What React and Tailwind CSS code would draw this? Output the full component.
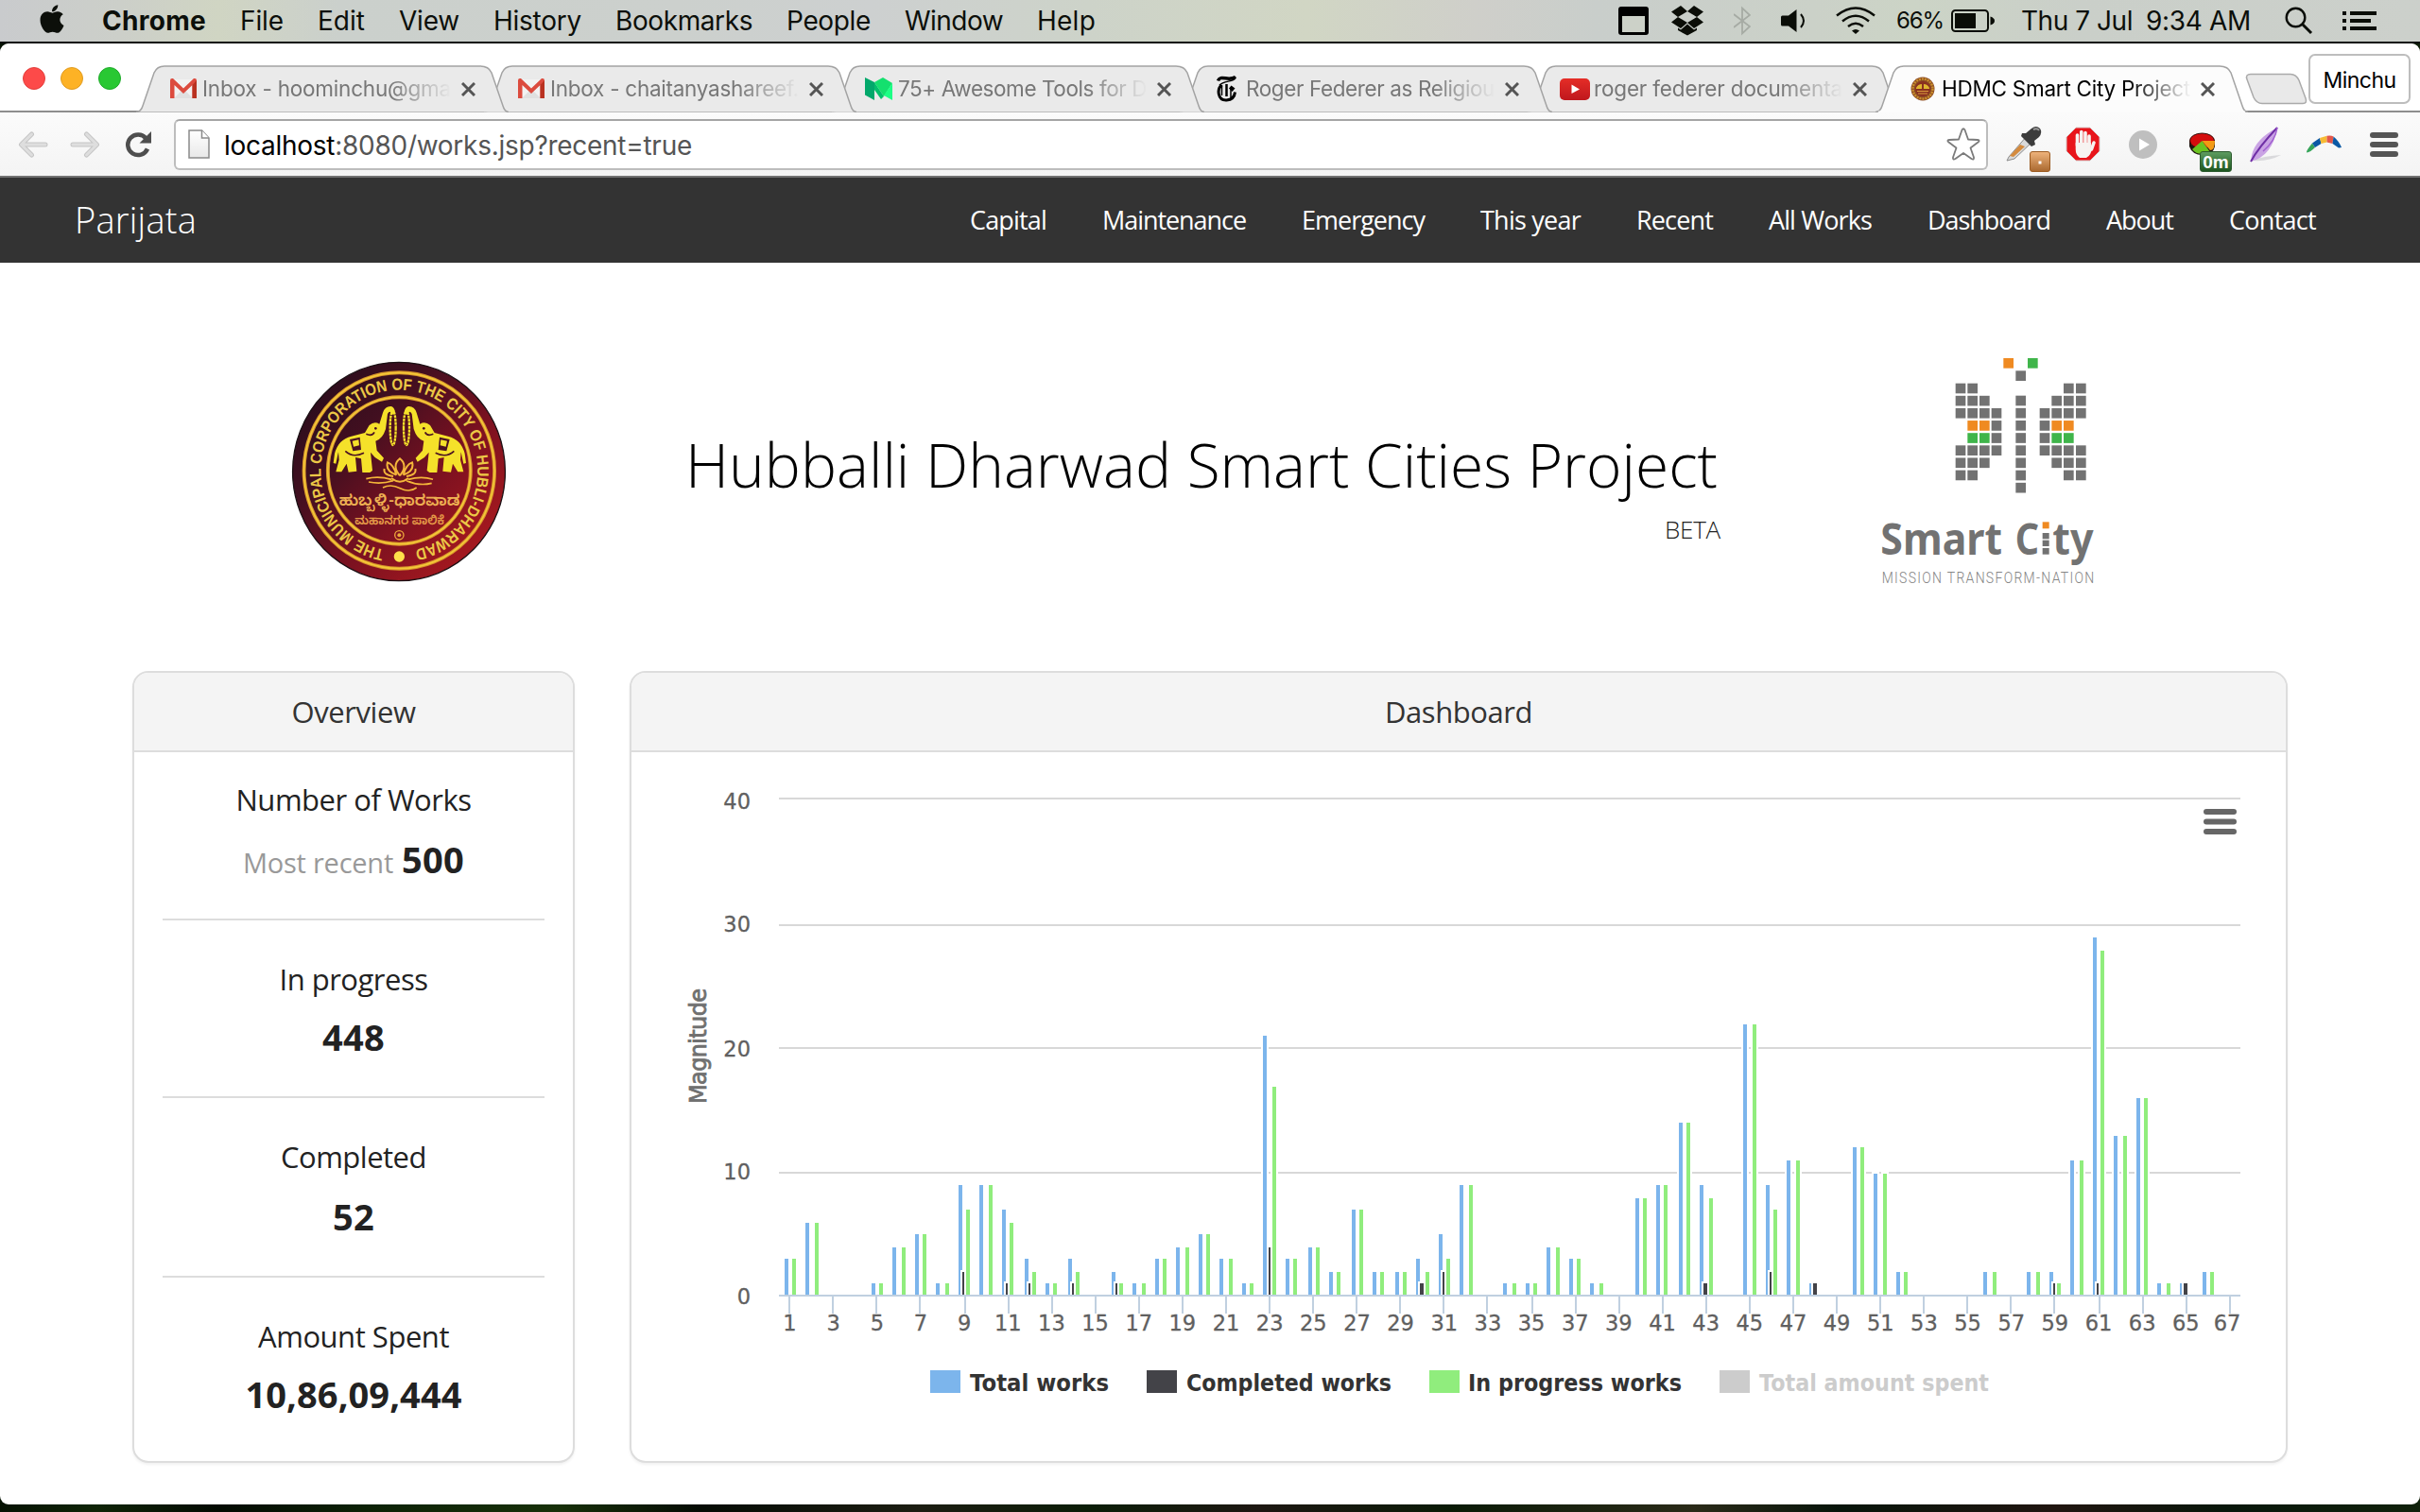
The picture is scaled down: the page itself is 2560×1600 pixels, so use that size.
import React, { useLayoutEffect, useRef, useState } from "react";
import { FaApple } from "react-icons/fa";

/* Inline text whose tracking is adjusted so that it fills a given width. */
function FitText({ w, className = "", children }) {
  const ref = useRef(null);
  const [spacing, setSpacing] = useState(0);
  useLayoutEffect(() => {
    const el = ref.current;
    const natural = el.getBoundingClientRect().width;
    setSpacing((w - natural) / el.textContent.length);
  }, [w]);
  return (
    <span
      ref={ref}
      className={"inline-block whitespace-nowrap shrink-0 " + className}
      style={{ letterSpacing: spacing }}
    >
      {children}
    </span>
  );
}

/* ---------- macOS menu bar ---------- */

const MENUS = [
  ["File", 46], ["Edit", 50], ["View", 64], ["History", 93], ["Bookmarks", 145],
  ["People", 89], ["Window", 104], ["Help", 62],
];

function MenuBar() {
  return (
    <div className="flex h-[46px] shrink-0 items-center border-b-2 border-[#060a08] bg-[linear-gradient(90deg,#c9cbcd_0%,#cccfc9_5%,#d0d5c3_9%,#cbd0cc_14%,#ccd0cd_28%,#cdd0d0_36%,#cdd3c9_45%,#d1d6c4_54%,#cfcfca_61%,#c9cecb_66%,#cbd1c8_75%,#ccd4c6_79%,#cacfc9_86%,#ccd0cb_100%)] text-[28px] leading-none text-[#0c0f0a]">
      <FaApple className="ml-[40px] -mt-1 h-[34px] w-[30px] shrink-0" />
      <FitText w={110} className="ml-[38px] font-bold">Chrome</FitText>
      <div className="ml-9 flex gap-9">
        {MENUS.map(([t, w]) => <FitText key={t} w={w}>{t}</FitText>)}
      </div>
      <svg className="ml-auto shrink-0" width="32" height="30" viewBox="0 0 32 30">
        <rect width="32" height="30" rx="3" fill="#000" />
        <rect x="4" y="10" width="24" height="17" fill="#ccd1c8" />
      </svg>
      <svg className="ml-6 shrink-0" width="34" height="32" viewBox="0 0 34 32" fill="#0a0d07">
        <path d="M10 0 0 6.5 7 12 17 6ZM24 0 17 6 27 12 34 6.5ZM0 17.5 7 12 17 18 10 24ZM34 17.5 27 12 17 18 24 24ZM17 19.5 24 25.5 27 23.5V26L17 31.5 7 26V23.5L10 25.5Z" />
      </svg>
      <svg className="ml-8 shrink-0" width="18" height="32" viewBox="0 0 18 32" fill="none" stroke="#a6aba4" strokeWidth="1.8">
        <path d="M0 9 17 22 9 29.5V2.5L17 10 0 23" />
      </svg>
      <svg className="ml-8 shrink-0" width="26" height="26" viewBox="0 0 26 26">
        <path d="M0 9q0-1.500 1.500-1.500H8L16.500 1V25L8 18.500H1.500Q0 18.500 0 17Z" fill="#0a0d07" />
        <path d="M21 6Q27 13 21 20" fill="none" stroke="#0a0d07" strokeWidth="2" />
      </svg>
      <svg className="ml-8 shrink-0" width="42" height="30" viewBox="0 0 42 30" fill="none" stroke="#0a0d07" strokeWidth="2.500">
        <path d="M1 9.500Q21-6.500 41 9.500M7 15.500Q21 4 35 15.500M13 21Q21 14.500 29 21" />
        <path d="M17 25.500Q21 22.500 25 25.500L21 29Z" fill="#0a0d07" stroke="none" />
      </svg>
      <FitText w={50} className="ml-[22px] text-[24px]">66%</FitText>
      <svg className="ml-2 shrink-0" width="46" height="24" viewBox="0 0 46 24">
        <rect x="1" y="1" width="38" height="22" rx="3.500" fill="none" stroke="#0a0d07" strokeWidth="2" />
        <rect x="4" y="4" width="22" height="16" fill="#0a0d07" />
        <path d="M41.500 7.500Q46 9 46 12T41.500 16.500Z" fill="#0a0d07" />
      </svg>
      <FitText w={118} className="ml-[28px]">Thu 7 Jul</FitText>
      <FitText w={111} className="ml-[14px]">9:34 AM</FitText>
      <svg className="ml-[36px] shrink-0" width="30" height="30" viewBox="0 0 30 30" fill="none" stroke="#0a0d07">
        <circle cx="11.500" cy="11.500" r="9.800" strokeWidth="2.400" />
        <path d="M18.500 18.500 28 28" strokeWidth="3" />
      </svg>
      <svg className="ml-[31px] mr-[46px] shrink-0" width="36" height="20" viewBox="0 0 36 20" fill="#0a0d07">
        <path d="M0 0h4v4H0zM8 0h28v4H8zM0 8h4v4H0zM8 8h22v4H8zM0 16h4v4H0zM8 16h28v4H8z" />
      </svg>
    </div>
  );
}

/* ---------- Browser tabs ---------- */

const Gmail = () => (
  <svg width="28" height="22" viewBox="0 0 28 22">
    <path d="M2 1H26V21H2Z" fill="#f2f2f2" />
    <path d="M4 21 14 11 24 21Z" fill="#e0e0e0" />
    <path d="M0 2V21H4.500V7L14 16 23.500 7V21H28V2Q28 0 26 0H25L14 10.500 3 0H2Q0 0 0 2Z" fill="#dc4b3e" />
    <path d="M23.500 7V21H28V2Z" fill="#b93221" />
  </svg>
);
const Medium = () => (
  <svg width="30" height="24" viewBox="0 0 30 24">
    <path d="M0 0 10 5V24L0 18.500Z" fill="#02a86b" />
    <path d="M10 5 19 0 29 6 20 20Z" fill="#14e06e" />
    <path d="M10 5 20 20 17 23 10 13Z" fill="#00c06b" />
    <path d="M29 6V24L20 19Z" fill="#1cff85" />
  </svg>
);
const Times = () => (
  <svg width="22" height="28" viewBox="0 0 22 28" fill="none" stroke="#000">
    <path d="M1.500 5.500C4-1.500 12 6.500 20 1.500" strokeWidth="3.500" />
    <path d="M20 1.500C19.500 7 8 5 3 10" strokeWidth="1.500" />
    <path d="M10.500 9V22" strokeWidth="2.500" />
    <path d="M5.500 10C0 14 1 26.500 10.500 26C16 25.500 19 22.500 19.500 17.500" strokeWidth="3" />
    <path d="M5.500 10V21" strokeWidth="1.500" />
    <path d="M15.500 10.500 19.500 13.500 16.500 17 13 13.500Z" fill="#000" stroke="none" />
    <path d="M15 12V23" strokeWidth="1.500" />
  </svg>
);
const YouTube = () => (
  <svg width="32" height="23" viewBox="0 0 32 23">
    <defs>
      <linearGradient id="yt" x2="0" y2="1"><stop stopColor="#e52d27" /><stop offset="1" stopColor="#bf171d" /></linearGradient>
    </defs>
    <rect width="32" height="23" rx="5" fill="url(#yt)" />
    <path d="M12.500 6.500 21 11.500 12.500 16Z" fill="#fff" />
  </svg>
);
const MiniSeal = () => (
  <svg width="26" height="26" viewBox="0 0 26 26">
    <circle cx="13" cy="13" r="12.500" fill="#8c4a24" />
    <circle cx="13" cy="13" r="10.500" fill="none" stroke="#c98f2c" strokeWidth="2.500" strokeDasharray="2 1" />
    <circle cx="13" cy="13" r="8" fill="#8a3120" />
    <path d="M6 12Q8 8 12 8V13H6ZM20 12Q18 8 14 8V13H20Z" fill="#e0b52f" />
    <path d="M7 15.500H19M8 18H18" stroke="#d79c3a" strokeWidth="1.200" />
  </svg>
);

const TABS = [
  { icon: <Gmail />, text: "Inbox - hoominchu@gma" },
  { icon: <Gmail />, text: "Inbox - chaitanyashareef." },
  { icon: <Medium />, text: "75+ Awesome Tools for D" },
  { icon: <Times />, text: "Roger Federer as Religiou" },
  { icon: <YouTube />, text: "roger federer documenta" },
  { icon: <MiniSeal />, text: "HDMC Smart City Project", active: true },
];

function Tab({ icon, text, active, z }) {
  return (
    <div className="relative -mr-[26px] h-[50px] w-[394px] shrink-0" style={{ zIndex: z }}>
      <svg className="absolute inset-0" width="394" height="50" viewBox="0 0 394 50">
        <path
          d="M0 49.500Q5 49.500 7 43L19 8Q22 1 30 1H364Q373 1 376 8L388 43Q390 49.500 394 49.500"
          fill={active ? "#fcfcfc" : "#eaeaea"} stroke="#a3a3a3" strokeWidth="1.500"
        />
        {active && <path d="M3 50H391" stroke="#fbfbfb" strokeWidth="3" />}
      </svg>
      <div className="relative flex h-full items-center">
        <div className="ml-[34px] flex w-8 shrink-0 justify-center">{icon}</div>
        <div className="ml-[4px] w-[264px] overflow-hidden whitespace-nowrap [mask-image:linear-gradient(90deg,#000_75%,transparent_100%)]">
          <FitText w={263} className={"text-[22.5px] leading-[30px] " + (active ? "text-black" : "text-[#777]")}>{text}</FitText>
        </div>
        <svg className="ml-[10px] shrink-0" width="15" height="15" viewBox="0 0 15 15" stroke="#555" strokeWidth="3">
          <path d="M1 1 14 14M14 1 1 14" />
        </svg>
      </div>
    </div>
  );
}

function TabStrip() {
  return (
    <div className="flex h-[73px] items-end rounded-t-[10px] border-b-2 border-[#8e8e8e] bg-white">
      <div className="ml-6 flex gap-4 self-center pt-[3px]">
        <div className="size-6 rounded-full border border-[#e33e3b] bg-[#fd4a49]" />
        <div className="size-6 rounded-full border border-[#e09b20] bg-[#fdb225]" />
        <div className="size-6 rounded-full border border-[#1eaa29] bg-[#29c833]" />
      </div>
      <div className="ml-4 -mb-[2px] flex">
        {TABS.map((t, i) => <Tab key={t.text} {...t} z={t.active ? 20 : 10 - i} />)}
      </div>
      <svg className="mb-[6px] ml-[23px] shrink-0" width="66" height="34" viewBox="0 0 66 34">
        <path d="M6 1.500H48Q54 1.500 57 8L64 27Q66 32.500 61 32.500H18Q12 32.500 9 26L2 7Q0 1.500 6 1.500Z" fill="#e9e9e9" stroke="#aaa" strokeWidth="1.500" />
      </svg>
      <div className="mb-[7px] ml-[1px] flex h-[53px] w-[108px] shrink-0 items-center justify-center rounded-[7px] border-2 border-[#bdbdbd] bg-white pt-[3px] text-[23px] leading-none text-black">
        <FitText w={77}>Minchu</FitText>
      </div>
    </div>
  );
}

/* ---------- Toolbar ---------- */

function Toolbar() {
  return (
    <div className="flex h-[69px] items-center border-b-2 border-[#717171] bg-gradient-to-b from-[#fbfbfb] to-[#f4f4f4]">
      <svg className="ml-[19px] shrink-0" width="32" height="28" viewBox="0 0 32 28" fill="none" stroke="#c6c6c6" strokeWidth="5" strokeLinejoin="round" strokeLinecap="round">
        <path d="M14.500 3 3.500 14 14.500 25M4 14H29" /><path d="M14.500 3 3.500 14 14.500 25M4 14H29" stroke="#dedede" strokeWidth="3" />
      </svg>
      <svg className="ml-[23px] shrink-0" width="32" height="28" viewBox="0 0 32 28" fill="none" stroke="#c6c6c6" strokeWidth="5" strokeLinejoin="round" strokeLinecap="round">
        <path d="M17.500 3 28.500 14 17.500 25M28 14H3" /><path d="M17.500 3 28.500 14 17.500 25M28 14H3" stroke="#dedede" strokeWidth="3" />
      </svg>
      <svg className="ml-[26px] shrink-0" width="28" height="28" viewBox="0 0 28 28">
        <path d="M22.500 7.500A10.800 10.800 0 1 0 24 18.500" fill="none" stroke="#4e4e4e" strokeWidth="4.500" />
        <path d="M28 0V12.500H15.500Z" fill="#4e4e4e" />
      </svg>
      <div className="ml-6 flex h-[54px] w-[1919px] shrink-0 items-center rounded-[6px] border-2 border-[#bdbdbd] border-t-[#a5a5a5] bg-white">
        <svg className="ml-[13px] shrink-0" width="23" height="31" viewBox="0 0 23 31">
          <defs><linearGradient id="pg" x2="0" y2="1"><stop stopColor="#fff" /><stop offset="1" stopColor="#e8e8e8" /></linearGradient></defs>
          <path d="M1 1H14.500L22 9V30H1Z" fill="url(#pg)" stroke="#8a8a8a" strokeWidth="1.500" />
          <path d="M14.500 1V9H22" fill="#fff" stroke="#8a8a8a" strokeWidth="1.500" />
        </svg>
        <FitText w={495} className="ml-[15px] pt-[2px] text-[28px] leading-none text-[#555]"><span className="text-black">localhost</span>:8080/works.jsp?recent=true</FitText>
        <svg className="ml-auto mr-[6px] shrink-0" width="36" height="35" viewBox="0 0 36 35" fill="#fff" stroke="#7b7b7b" strokeWidth="1.800" strokeLinejoin="round">
          <path d="M16.500 2.500Q18 0 19.500 2.500L23 12.500 33 13Q36 13.500 33.500 15.500L25.500 21.500 29 31.500Q29.500 34.500 26.500 33L18 27 9.500 33Q6.500 34.500 7 31.500L10.500 21.500 2.500 15.500Q0 13.500 3 13L13 12.500Z" />
        </svg>
      </div>
      {/* color picker */}
      <svg className="ml-[17px] mt-[8px] shrink-0" width="50" height="50" viewBox="0 0 50 50">
        <defs><linearGradient id="bg1" x2="0" y2="1"><stop stopColor="#efb47c" /><stop offset="1" stopColor="#a9682f" /></linearGradient></defs>
        <path d="M5 34 24 12 30 18 11 36 3 38Z" fill="#d9d9d9" stroke="#8b8b8b" />
        <path d="M6 33 17 21 22 23 10 34Z" fill="#d48a3d" />
        <path d="M19 9 23 9 29 4Q34 0 38 4Q41 8 37 13L32 17 33 21 29 23 18 12Z" fill="#3c3c3c" />
        <path d="M31 5Q35 3 37 6" stroke="#999" strokeWidth="2" fill="none" />
        <rect x="27.500" y="28.500" width="21" height="21" rx="2.500" fill="url(#bg1)" stroke="#9c5c22" />
        <rect x="36.500" y="38.500" width="3" height="3" fill="#fff" />
      </svg>
      {/* ad blocker */}
      <svg className="ml-[15px] shrink-0" width="37" height="37" viewBox="0 0 37 37">
        <path d="M11 1H26L36 11V26L26 36H11L1 26V11Z" fill="#e8151b" stroke="#d9c9c9" />
        <g stroke="#f7f3f1" strokeWidth="3.600" strokeLinecap="round" fill="none">
          <path d="M12.500 20V9M16.800 18V5.500M21 18V6.500M25 20V10M27.500 24 30 17" />
        </g>
        <path d="M10.700 17H26.800V23L29 20Q27 31 22 33H15Q10.700 30 10.700 24Z" fill="#f7f3f1" />
      </svg>
      <svg className="ml-[30px] shrink-0" width="30" height="30" viewBox="0 0 30 30">
        <circle cx="15" cy="15" r="15" fill="#bfbfbf" /><path d="M11 8.500 22 15 11 21.500Z" fill="#fff" />
      </svg>
      {/* usage timer */}
      <div className="relative ml-[33px] mt-[21px] h-[42px] w-[46px] shrink-0 self-start">
        <svg width="30" height="26" viewBox="0 0 30 26">
          <path d="M1 9V15Q4 24 15 24T28 15V9Z" fill="#1e1712" />
          <ellipse cx="14.500" cy="9" rx="13" ry="8" fill="#d40d0d" stroke="#2b0d08" />
          <path d="M14.500 9H28Q28 19 23 19Z" fill="#f39a14" />
          <path d="M14.500 9 23 21Q10 26 4 18Z" fill="#6bc321" />
        </svg>
        <div className="absolute bottom-0 right-0 flex h-[22px] w-[34px] items-center justify-center rounded-[3px] border border-[#2b5a2e] bg-gradient-to-b from-[#5d9c60] to-[#1d5720] font-['Liberation_Sans'] text-[19px] font-bold leading-none text-white">
          0m
        </div>
      </div>
      {/* feather */}
      <svg className="ml-[19px] shrink-0" width="34" height="38" viewBox="0 0 34 38">
        <path d="M4 35Q16 31 33 30Q20 37 4 36Z" fill="#d9d9dc" />
        <path d="M29 1Q6 13 2 30L1 37Q24 31 29 1Z" fill="#c9a3e4" />
        <path d="M29 1Q9 22 1 37" fill="none" stroke="#6f2fa6" strokeWidth="2" />
        <path d="M29 1Q27 15 14 26" fill="none" stroke="#a05ed0" strokeWidth="1.500" />
      </svg>
      {/* boomerang */}
      <svg className="ml-[25px] shrink-0" width="40" height="20" viewBox="0 0 40 20">
        <path d="M1 18.500Q0 17 7 8.500L10 13Q5 18 1 18.500Z" fill="#36a55a" />
        <path d="M7 8.500 15 3 16.500 9 10 13Z" fill="#0b59a5" />
        <path d="M15 3 22.500.800V7.500L16.500 9Z" fill="#f6bb34" />
        <path d="M22.500.800Q27 0 29.500 1.500L28.500 9 22.500 7.500Z" fill="#e4584a" />
        <path d="M29.500 1.500Q35 6 38 13L35 13.500 28.500 9Z" fill="#0b59a5" />
      </svg>
      <div className="ml-[28px] flex flex-col gap-1">
        <div className="h-[6px] w-[30px] rounded-full bg-[#555]" />
        <div className="h-[6px] w-[30px] rounded-full bg-[#555]" />
        <div className="h-[6px] w-[30px] rounded-full bg-[#555]" />
      </div>
    </div>
  );
}

/* ---------- Page ---------- */

const NAV = [
  ["Capital", 81], ["Maintenance", 152], ["Emergency", 130], ["This year", 106], ["Recent", 81],
  ["All Works", 109], ["Dashboard", 130], ["About", 71], ["Contact", 92],
];

function NavBar() {
  return (
    <div className="flex h-[90px] items-center justify-between bg-[#333] pb-[2px] pl-[79px] pr-[110px] leading-none text-white">
      <FitText w={129} className="text-[38px] font-light">Parijata</FitText>
      <div className="flex gap-[59px] text-[27px]">
        {NAV.map(([t, w]) => <FitText key={t} w={w}>{t}</FitText>)}
      </div>
    </div>
  );
}

function Elephant() {
  return (
    <g>
      <path
        fill="#f5e12a"
        d="M192 330Q203 285 245 275L288 264 302 240Q318 226 334 236L345 200Q352 178 372 180Q384 184 384 204L374 206Q368 190 360 204L354 252Q344 284 322 290L326 320 348 344 342 356 320 342 306 326 312 384 304 390H280L276 346 258 342 262 386 236 389 230 362 214 388H196L206 350 204 325 196 362 188 360Z"
      />
      <path d="M240 285 272 278 276 318 250 322Z" fill="#4b1222" />
      <path d="M248 290 268 286 270 304 252 308Z" fill="#f5e12a" />
      <path d="M292 268Q312 276 318 262M226 322Q250 345 285 328" fill="none" stroke="#4b1222" strokeWidth="5" />
      <circle cx="322" cy="250" r="4" fill="#4b1222" />
      <ellipse cx="377" cy="248" rx="9" ry="55" fill="none" stroke="#f5e12a" strokeWidth="7" strokeDasharray="9 2" />
    </g>
  );
}

function Seal() {
  return (
    <svg width="260" height="260" viewBox="0 0 780 780" className="ml-[290px] mt-[92px] shrink-0">
      <defs>
        <linearGradient id="seal" x1=".1" y1=".1" x2=".85" y2=".85">
          <stop stopColor="#2a0d1c" /><stop offset=".3" stopColor="#420f20" />
          <stop offset=".65" stopColor="#7a1120" /><stop offset="1" stopColor="#a3181f" />
        </linearGradient>
        <path id="ring" d="M0 256A256 256 0 0 1 0-256A256 256 0 0 1 0 256" />
      </defs>
      <g transform="translate(396 387) scale(.972 1)">
        <circle r="347" fill="url(#seal)" stroke="#1b1014" strokeWidth="4" />
        <g transform="translate(1 -3)">
          <circle r="311" fill="none" stroke="#d8962c" strokeWidth="12" />
          <circle r="311" fill="none" stroke="#f4c838" strokeWidth="5" />
          <circle r="233" fill="none" stroke="#d8962c" strokeWidth="12" />
          <circle r="233" fill="none" stroke="#f4c838" strokeWidth="5" />
          <text fill="#ecc846" className="font-['Liberation_Sans'] text-[52px] font-bold">
            <textPath href="#ring" startOffset="49" textLength="1508" lengthAdjust="spacingAndGlyphs">
              THE MUNICIPAL CORPORATION OF THE CITY OF HUBLI-DHARWAD
            </textPath>
          </text>
        </g>
      </g>
      <circle cx="397" cy="657" r="17" fill="#ffe04a" />
      <circle cx="397" cy="589" r="14" fill="none" stroke="#eda93c" strokeWidth="4" />
      <circle cx="397" cy="589" r="6" fill="#eda93c" />
      <Elephant />
      <g transform="translate(797 0) scale(-1 1)"><Elephant /></g>
      <g fill="none" stroke="#f4b63a" strokeWidth="6">
        <path d="M399 400Q372 368 399 346Q426 368 399 400M388 398Q352 385 360 358Q380 365 388 398M410 398Q446 385 438 358Q418 365 410 398M378 402Q345 398 350 378M420 402Q453 398 448 378M372 408Q399 430 426 408" />
        <path d="M292 410Q330 400 372 412M426 412Q468 400 504 412M300 420Q340 428 378 416M420 416Q460 434 500 424M345 438Q370 425 400 440T452 438" strokeWidth="5" />
      </g>
      <text x="398" y="495" textAnchor="middle" fill="#eeb052" textLength="384" lengthAdjust="spacingAndGlyphs" className="font-['Noto_Sans_Kannada','Noto_Sans',sans-serif] text-[50px] font-semibold">ಹುಬ್ಬಳ್ಳಿ-ಧಾರವಾಡ</text>
      <text x="398" y="556" textAnchor="middle" fill="#e59a48" textLength="284" lengthAdjust="spacingAndGlyphs" className="font-['Noto_Sans_Kannada','Noto_Sans',sans-serif] text-[40px] font-semibold">ಮಹಾನಗರ ಪಾಲಿಕೆ</text>
    </svg>
  );
}

/* Butterfly mosaic: g gray, o orange, n green. Wings mirror around the body. */
const WING = ["gg..", "ggg.", "gggg", ".oog", ".nng", "gggg", "ggg.", "gg.."];
const CELL = { g: "#727272", o: "#ef8a21", n: "#3fb54a" };
const WING_X = [296, 334, 372, 410];
const MIRROR_X = [678, 639, 601, 563];

function SmartCityLogo() {
  const sq = (x, y, c, k) => <rect key={k} x={x} y={y} width="32" height="32" fill={c} />;
  return (
    <svg width="270" height="270" viewBox="0 0 810 810" className="ml-[150px] mt-[82px] shrink-0">
      {sq(448, 57, CELL.o, "a")}
      {sq(525, 57, CELL.n, "b")}
      {sq(487, 97, CELL.g, "c")}
      {Array.from({ length: 8 }, (_, i) => sq(487, 176 + i * 39.500, CELL.g, "s" + i))}
      {WING.flatMap((row, r) =>
        row.split("").flatMap((c, i) =>
          c === "." ? [] : [sq(WING_X[i], 137 + r * 39.400, CELL[c], `l${r}${i}`), sq(MIRROR_X[i], 137 + r * 39.400, CELL[c], `r${r}${i}`)]
        )
      )}
      <g fill="#727272" className="font-['Noto_Sans',sans-serif] text-[140px] font-bold">
        <text x="58" y="680" textLength="386" lengthAdjust="spacingAndGlyphs">Smart</text>
        <text x="485" y="680" textLength="76" lengthAdjust="spacingAndGlyphs">C</text>
        <text x="604" y="680" textLength="130" lengthAdjust="spacingAndGlyphs">ty</text>
      </g>
      <rect x="572" y="577" width="21" height="21" fill={CELL.o} />
      <rect x="572" y="612" width="21" height="19" fill={CELL.g} />
      <rect x="572" y="635" width="21" height="19" fill={CELL.g} />
      <rect x="572" y="660" width="21" height="20" fill={CELL.g} />
      <text transform="translate(62 770) scale(.84 1)" textLength="802" fill="#858585" className="font-['Roboto','Open_Sans',sans-serif] text-[50px] font-light">MISSION TRANSFORM-NATION</text>
    </svg>
  );
}

function Hero() {
  return (
    <div className="flex h-[432px] items-start">
      <Seal />
      <div className="ml-[174px] mt-[174px] flex w-[1096px] shrink-0 flex-col items-end">
        <FitText w={1092} className="mr-[3px] text-[64px] font-light leading-[80px] text-black">Hubballi Dharwad Smart Cities Project</FitText>
        <FitText w={59} className="mt-[8px] text-[26px] font-light leading-[40px] text-[#222]">BETA</FitText>
      </div>
      <SmartCityLogo />
    </div>
  );
}

function Card({ title, titleWidth, className, children }) {
  return (
    <div className={"flex h-[838px] shrink-0 flex-col overflow-hidden rounded-[17px] border-2 border-[#ddd] bg-white shadow-[0_2px_3px_rgba(0,0,0,0.06)] " + className}>
      <div className="flex h-[84px] shrink-0 items-center justify-center border-b-2 border-[#ddd] bg-[#f4f4f4] text-[31px] leading-none text-[#333]">
        <FitText w={titleWidth}>{title}</FitText>
      </div>
      {children}
    </div>
  );
}

function Overview() {
  return (
    <Card title="Overview" titleWidth={131} className="w-[468px]">
      <div className="mx-[30px] flex flex-col text-[31px] text-[#222]">
        <div className="flex h-[176px] flex-col items-center pt-[30px]">
          <FitText w={249} className="leading-[40px]">Number of Works</FitText>
          <div className="mt-[13px] flex items-baseline gap-[9px] leading-[60px]">
            <FitText w={159} className="text-[29px] text-[#999]">Most recent</FitText>
            <FitText w={66} className="text-[38px] font-bold">500</FitText>
          </div>
        </div>
        <div className="flex h-[188px] flex-col items-center border-t-2 border-[#ddd] pt-[42px]">
          <FitText w={157} className="leading-[40px]">In progress</FitText>
          <FitText w={66} className="mt-[11px] text-[38px] font-bold leading-[60px]">448</FitText>
        </div>
        <div className="flex h-[190px] flex-col items-center border-t-2 border-[#ddd] pt-[42px]">
          <FitText w={154} className="leading-[40px]">Completed</FitText>
          <FitText w={44} className="mt-[13px] text-[38px] font-bold leading-[60px]">52</FitText>
        </div>
        <div className="flex h-[190px] flex-col items-center border-t-2 border-[#ddd] pt-[42px]">
          <FitText w={202} className="leading-[40px]">Amount Spent</FitText>
          <FitText w={229} className="mt-[11px] text-[38px] font-bold leading-[60px]">10,86,09,444</FitText>
        </div>
      </div>
    </Card>
  );
}

const TOTAL = { 1: 3, 2: 6, 5: 1, 6: 4, 7: 5, 8: 1, 9: 9, 10: 9, 11: 7, 12: 3, 13: 1, 14: 3, 16: 2, 17: 1, 18: 3, 19: 4, 20: 5, 21: 3, 22: 1, 23: 21, 24: 3, 25: 4, 26: 2, 27: 7, 28: 2, 29: 2, 30: 3, 31: 5, 32: 9, 34: 1, 35: 1, 36: 4, 37: 3, 38: 1, 40: 8, 41: 9, 42: 14, 43: 9, 45: 22, 46: 9, 47: 11, 48: 1, 50: 12, 51: 10, 52: 2, 56: 2, 58: 2, 59: 2, 60: 11, 61: 29, 62: 13, 63: 16, 64: 1, 65: 1, 66: 2 };
const PROGRESS = { ...TOTAL, 9: 7, 11: 6, 12: 2, 14: 2, 16: 1, 23: 17, 30: 2, 31: 3, 43: 8, 46: 7, 48: 0, 59: 1, 61: 28, 65: 0 };
/* [x, width, value] */
const COMPLETED = [
  [1018, 2, 2], [1064, 4, 1], [1088, 2, 1], [1134, 2, 1], [1180, 2, 1], [1342, 2, 4], [1502, 4, 1],
  [1526, 2, 2], [1802, 4, 1], [1872, 2, 2], [1918, 4, 1], [2172, 2, 1], [2218, 2, 1], [2310, 4, 1],
];
/* Bar tops, snapped to the two-pixel grid */
const TOP = { 1: 1358, 2: 1346, 3: 1332, 4: 1320, 5: 1306, 6: 1294, 7: 1280, 8: 1268, 9: 1254, 10: 1242, 11: 1228, 12: 1214, 13: 1202, 14: 1188, 16: 1162, 17: 1150, 21: 1096, 22: 1084, 28: 1006, 29: 992 };
const center = (n) => 824 + (1546 / 67) * (n - 0.5);
const snap = (v) => 2 * Math.floor(v / 2);

function Bar({ x, w = 4, v, fill }) {
  const y = TOP[v];
  return (
    <g>
      <rect x={x - 2} y={y - 2} width={w + 4} height={1372 - y} fill="#fff" />
      <rect x={x} y={y} width={w} height={1370 - y} fill={fill} />
    </g>
  );
}

const GRID = [[40, 845, 856], [30, 979, 986], [20, 1109, 1118], [10, 1241, 1248], [0, null, 1380]];
const LEGEND = [
  ["Total works", 984, 1026, 147, "#7cb5ec", "#333"],
  ["Completed works", 1213, 1255, 217, "#434348", "#333"],
  ["In progress works", 1512, 1553, 226, "#90ed7d", "#333"],
  ["Total amount spent", 1819, 1861, 243, "#ccc", "#ccc"],
];

function Chart() {
  return (
    <svg width="1750" height="750" viewBox="668 796 1750 750" className="font-['DejaVu_Sans',sans-serif]">
      {GRID.map(([v, y, b]) => (
        <g key={v}>
          {y && <path d={`M824 ${y}H2370`} stroke="#d8d8d8" strokeWidth="2" />}
          <text x="794" y={b} textAnchor="end" fill="#606060" stroke="#606060" strokeWidth=".3" className="text-[22.5px]">{v}</text>
        </g>
      ))}
      <text transform="translate(747 1107) rotate(-90)" textAnchor="middle" textLength="122" fill="#707070" stroke="#707070" strokeWidth=".8" className="text-[24px]">Magnitude</text>
      {Object.entries(TOTAL).map(([n, v]) => <Bar key={n} x={snap(center(n) - 5.3)} v={v} fill="#7cb5ec" />)}
      {COMPLETED.map(([x, w, v]) => <Bar key={x} x={x} w={w} v={v} fill="#434348" />)}
      {Object.entries(PROGRESS).map(([n, v]) => v > 0 && <Bar key={n} x={snap(center(n) + 3.4)} v={v} fill="#90ed7d" />)}
      <path d="M824 1371H2370" stroke="#c0d0e0" strokeWidth="2" />
      {Array.from({ length: 34 }, (_, i) => 2 * i + 1).map((n) => (
        <g key={n}>
          <rect x={snap(center(n))} y="1371" width="2" height="19" fill="#c0d0e0" />
          <text x={n === 67 ? 2356 : center(n)} y="1408" textAnchor="middle" fill="#606060" stroke="#606060" strokeWidth=".3" className="text-[22.5px]">{n}</text>
        </g>
      ))}
      {LEGEND.map(([t, sx, tx, w, sw, c]) => (
        <g key={t}>
          <rect x={sx} y="1450" width="32" height="24" fill={sw} />
          <text x={tx} y="1471.500" textLength={w} lengthAdjust="spacingAndGlyphs" fill={c} className="text-[24px] font-bold">{t}</text>
        </g>
      ))}
      <path d="M2334 859H2363M2334 869.500H2363M2334 880H2363" stroke="#666" strokeWidth="6" strokeLinecap="round" />
    </svg>
  );
}

export default function App() {
  return (
    <div className="flex h-[1600px] w-[2560px] flex-col overflow-hidden bg-[linear-gradient(90deg,#061203,#0f2407_4%,#030a02_9%,#0c2106_15%,#173009_23%,#050b04_29%,#1c1d12_38%,#0b1d07_45%,#1d1712_52%,#0a1a06_60%,#2a2a18_70%,#07140a_76%,#201510_85%,#08160a_92%,#10210a)] font-['Inter',sans-serif]">
      <MenuBar />
      <div className="flex h-[1546px] shrink-0 flex-col overflow-hidden rounded-[9px] bg-white">
        <TabStrip />
        <Toolbar />
        <div className="flex flex-col font-['Open_Sans',sans-serif]">
          <NavBar />
          <Hero />
          <div className="flex gap-[58px] pl-[140px]">
            <Overview />
            <Card title="Dashboard" titleWidth={156} className="w-[1754px]"><Chart /></Card>
          </div>
        </div>
      </div>
    </div>
  );
}
